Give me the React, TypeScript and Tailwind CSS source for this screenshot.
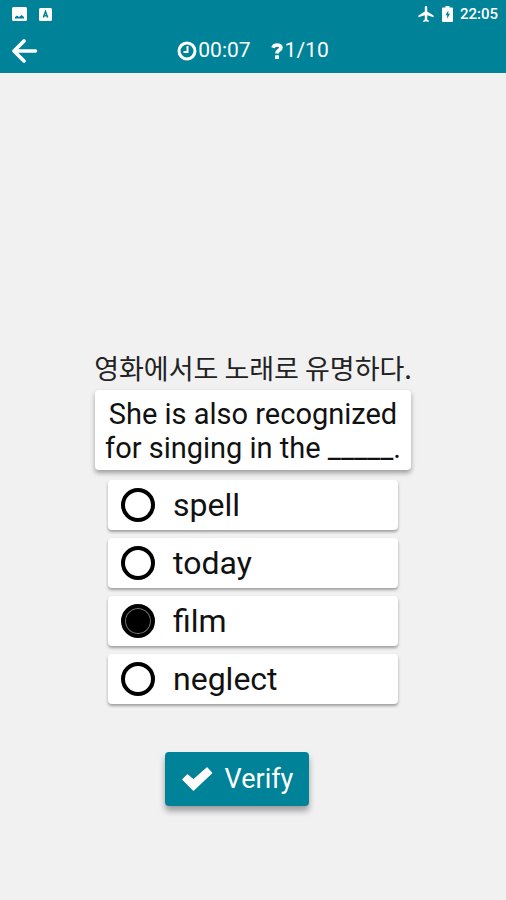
import { useState } from 'react';

const OPTIONS = ['spell', 'today', 'film', 'neglect'];

export default function App() {
  const [selected, setSelected] = useState('film');

  return (
    <div className="flex min-h-screen flex-col bg-[#f1f1f1] font-[Roboto,'Noto_Sans_CJK_KR',sans-serif] text-[#111]">
      <header className="bg-[#008299] text-white">
        <StatusBar />
        <Toolbar />
      </header>

      <main className="flex flex-1 flex-col items-center justify-end px-6 pb-[94px]">
        <p className="font-['Noto_Sans_CJK_KR',sans-serif] text-[27px] leading-9 font-normal text-[#222]">
          영화에서도 노래로 유명하다.
        </p>
        <h1 className="mt-1 rounded-sm bg-white px-[10px] pt-[7px] pb-[5px] text-center text-[29px] leading-[34px] shadow-[0_3px_5px_rgba(0,0,0,0.35)]">
          She is also recognized
          <br />
          for singing in the _____.
        </h1>

        <form
          className="mt-[10px] flex w-full flex-col items-center"
          onSubmit={(e) => e.preventDefault()}
        >
          <div className="flex w-full max-w-[290px] flex-col gap-2">
            {OPTIONS.map((word) => (
              <label
                key={word}
                className="flex h-[50px] items-center gap-[18px] rounded-sm bg-white pl-[13px] text-[32px] leading-[50px] shadow-[0_2px_3px_rgba(0,0,0,0.35)]"
              >
                <input
                  type="radio"
                  name="answer"
                  value={word}
                  checked={selected === word}
                  onChange={() => setSelected(word)}
                  className="h-[34px] w-[34px] shrink-0 appearance-none rounded-full border-4 border-black bg-white checked:bg-[#777] checked:shadow-[inset_0_0_0_1px_#777,inset_0_0_0_13px_#000]"
                />
                {word}
              </label>
            ))}
          </div>

          <button
            type="submit"
            className="mt-12 mr-8 flex h-[54px] items-center gap-3 rounded-sm bg-[#008299] px-4 text-[27px] text-white shadow-[0_5px_6px_rgba(0,0,0,0.35)]"
          >
            <CheckIcon />
            Verify
          </button>
        </form>
      </main>
    </div>
  );
}

function StatusBar() {
  return (
    <div className="flex h-7 items-center justify-between pr-2 pl-3">
      <div className="flex items-center gap-3">
        <svg viewBox="0 0 15 14" className="h-[14px] w-[15px]">
          <rect width="15" height="14" rx="1.5" fill="#fff" />
          <path d="M3 11.5V10l2-1.500L7 10l2.500-2L12 10v1.500z" fill="#008299" />
        </svg>
        <svg viewBox="0 0 13 13" className="h-[13px] w-[13px]">
          <rect width="13" height="13" rx="1.5" fill="#fff" />
          <path d="M4.300 9.500 6.500 3.500l2.200 6M5 7.800h3" fill="none" stroke="#008299" strokeWidth="1.500" />
        </svg>
      </div>
      <div className="flex items-center">
        <svg viewBox="2 2 19 20" className="mr-2 h-4 w-4" fill="#fff">
          <path d="M21 16v-2l-8-5V3.500a1.500 1.500 0 0 0-3 0V9l-8 5v2l8-2.500V19l-2 1.500V22l3.500-1 3.500 1v-1.500L13 19v-5.500z" />
        </svg>
        <svg viewBox="0 0 11 16" className="mr-[7px] h-4 w-[11px]">
          <path d="M3.500 0h4v1.500H10a1 1 0 0 1 1 1V15a1 1 0 0 1-1 1H1a1 1 0 0 1-1-1V2.500a1 1 0 0 1 1-1h2.500z" fill="#fff" />
          <path d="M6.300 4.500 3.500 9.300h1.700v3.400l2.700-4.900H6.300z" fill="#008299" />
        </svg>
        <span className="text-[15px] font-medium">22:05</span>
      </div>
    </div>
  );
}

function Toolbar() {
  return (
    <div className="grid h-[45px] grid-cols-[1fr_auto_1fr] items-center px-3 text-[21px]">
      <button type="button" aria-label="Back" className="justify-self-start">
        <svg
          viewBox="0 0 26 24"
          className="h-6 w-[26px]"
          fill="none"
          stroke="#fff"
          strokeWidth="3.600"
          strokeLinecap="round"
          strokeLinejoin="round"
        >
          <path d="M12 2 2 12l10 10M2 12h21.500" />
        </svg>
      </button>
      <div className="flex items-center gap-5">
        <span className="flex items-center gap-px">
          <svg viewBox="0 0 20 20" className="h-5 w-5" fill="none" stroke="#fff">
            <circle cx="10" cy="10" r="8" strokeWidth="3" />
            <path d="M10.500 5v6H6.500" strokeWidth="2" />
          </svg>
          00:07
        </span>
        <span className="flex items-center gap-[2px]">
          <svg viewBox="0 0 12 16" className="h-4 w-3">
            <path d="M2 4.800C2.600 2.800 4 2 6 2c2.500 0 4 1 4 2.800C10 7.300 6 7 6 10.500" fill="none" stroke="#fff" strokeWidth="3.600" />
            <rect x="4" y="12.200" width="4" height="3.800" rx="0.500" fill="#fff" />
          </svg>
          1/10
        </span>
      </div>
    </div>
  );
}

function CheckIcon() {
  return (
    <svg viewBox="0 0 32 24" className="h-6 w-8" fill="#fff" stroke="#fff" strokeWidth="1.500" strokeLinejoin="round">
      <path d="M2 12.500 6.500 8l6 5L26 1l4.500 5L12.500 23z" />
    </svg>
  );
}
